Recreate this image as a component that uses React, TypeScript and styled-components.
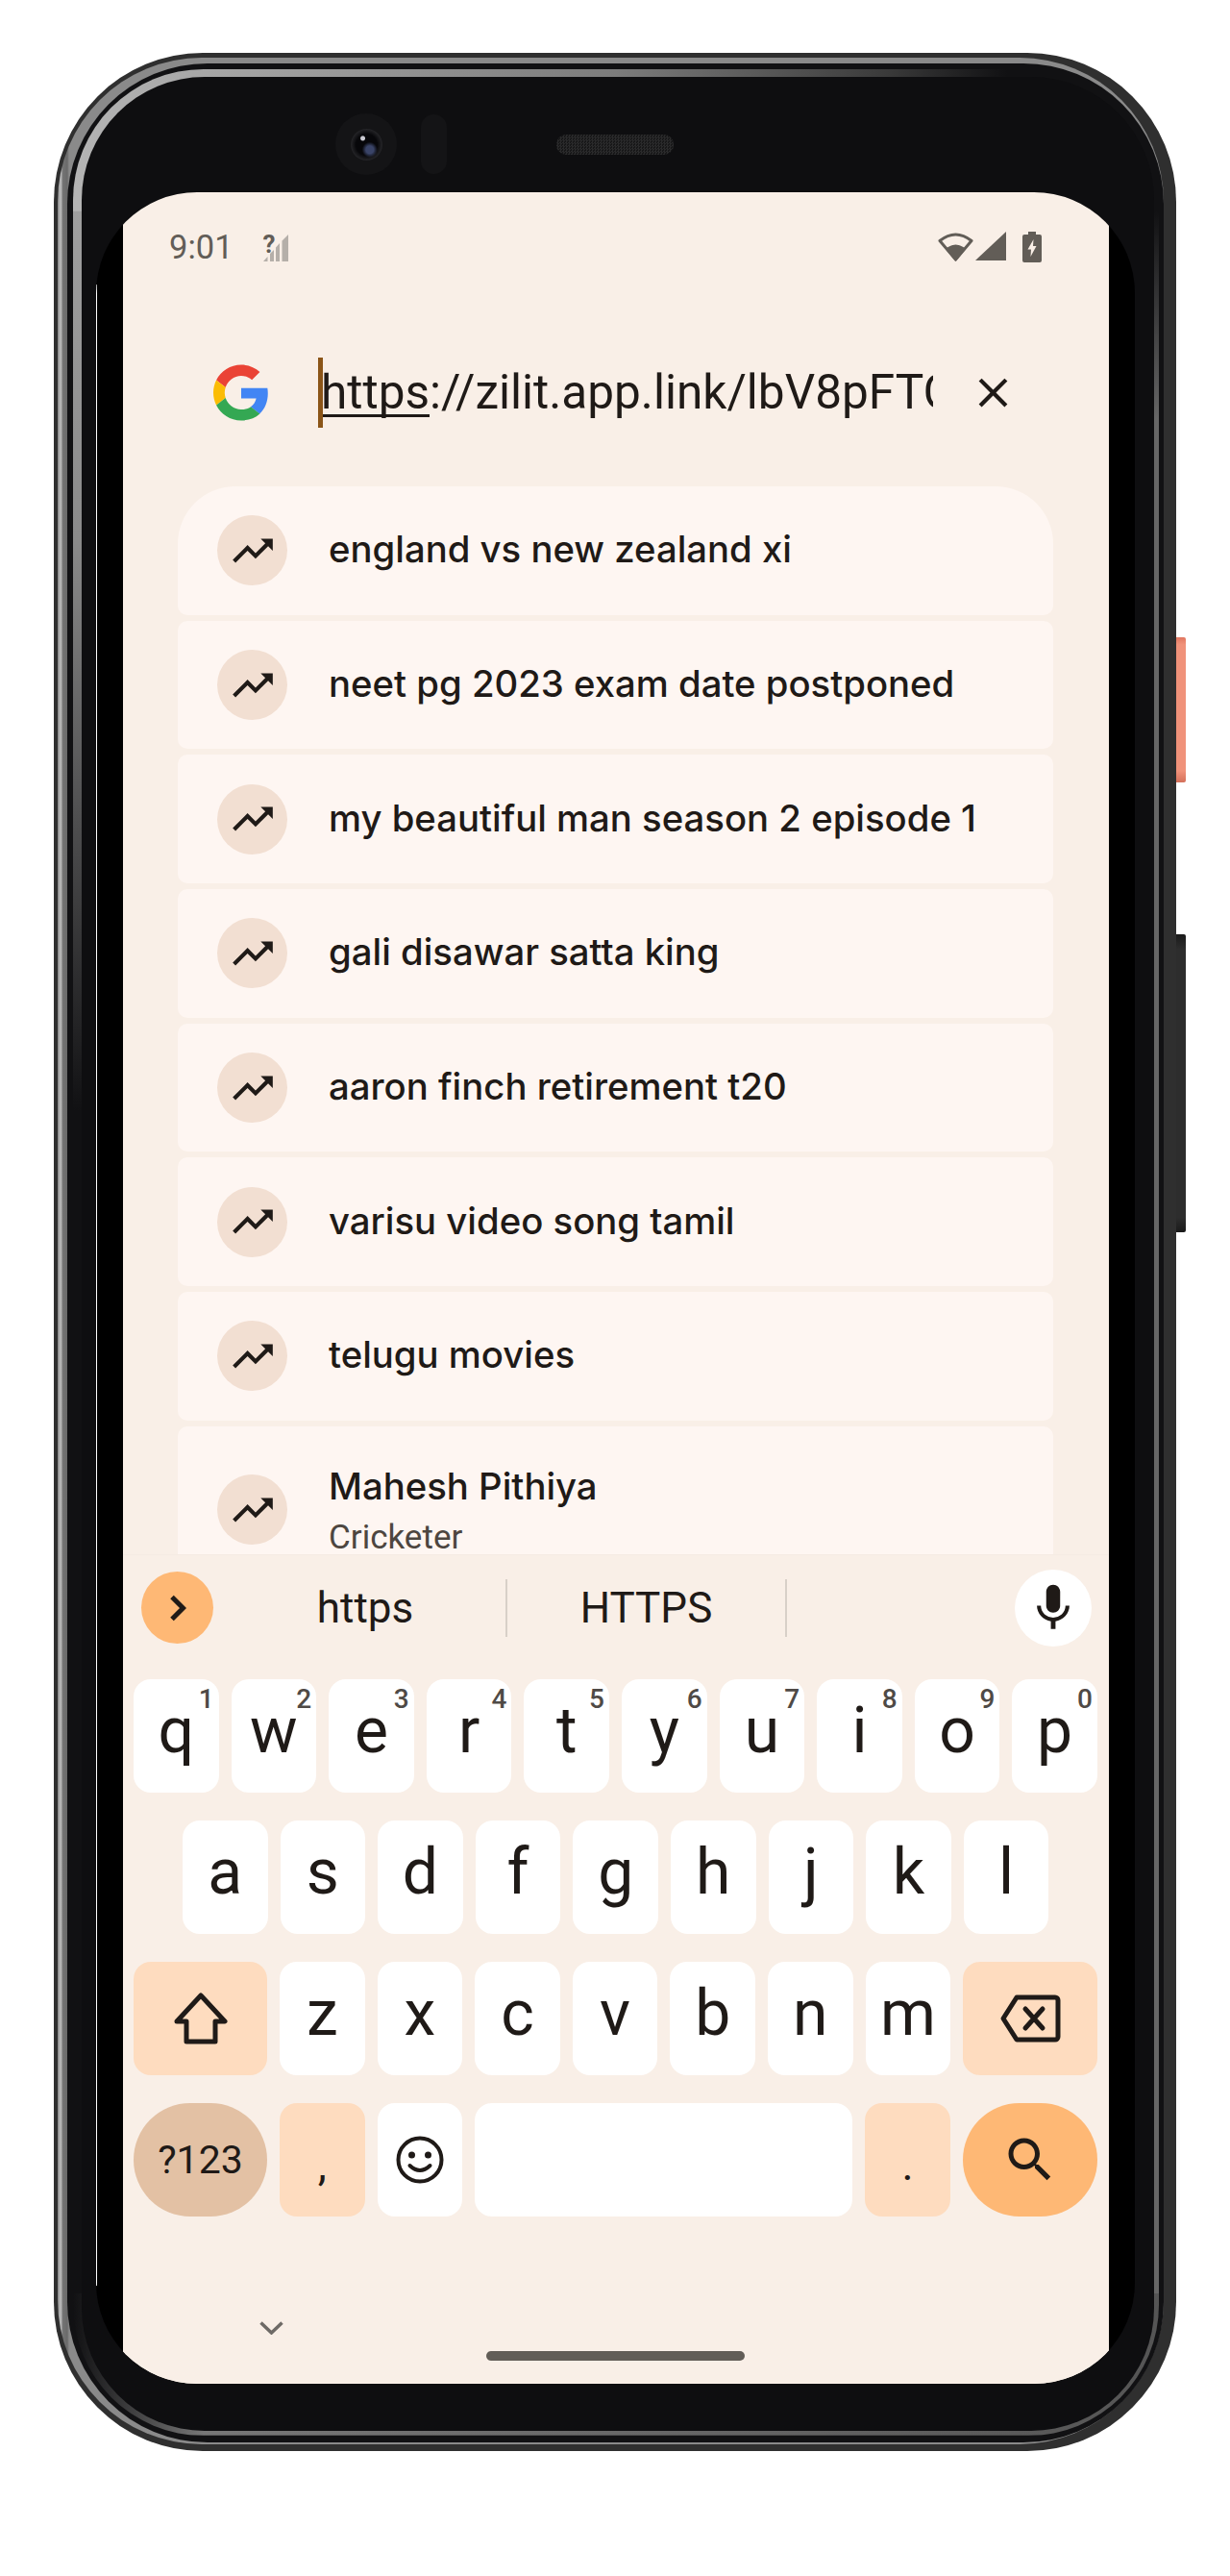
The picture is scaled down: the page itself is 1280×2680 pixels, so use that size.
import React from "react";
import styled, { createGlobalStyle } from "styled-components";

const INK = "#1f1a17";
const SANS = `Roboto, "Liberation Sans", sans-serif`;
const TITLE = `Inter, Roboto, sans-serif`;

const GlobalStyle = createGlobalStyle`
  html, body {
    margin: 0;
    background: #fff;
  }
  * {
    box-sizing: border-box;
  }
`;

const Page = styled.div`
  width: 1280px;
  height: 2680px;
  padding: 55px 56px 0;
  background: #fff;
  overflow: hidden;
`;

//--------- Phone body -----------//

const Shell = styled.div`
  position: relative;
  width: 1168px;
  height: 2495px;
  display: flex;
  padding: 5px 13px 7px 4px;
  border-radius: 155px;
  background: #2f2f2f;
`;

const SideButton = styled.div<{ $top: number; $height: number; $orange?: boolean }>`
  position: absolute;
  right: -10px;
  top: ${({ $top }) => $top}px;
  width: 10px;
  height: ${({ $height }) => $height}px;
  border-radius: 0 2px 2px 0;
  background: ${({ $orange }) =>
    $orange
      ? "linear-gradient(#e0765f, #f0927a 5%, #f0927a 92%, #d4705a)"
      : "linear-gradient(#1a1a1a, #2d2d2d 5%, #2d2d2d 95%, #1a1a1a)"};
`;

const OuterRim = styled.div`
  flex: 1;
  display: flex;
  padding: 6px 0 2px 10px;
  border-radius: 150px;
  background: linear-gradient(to right, #7d7d7d 0, #b4b4b4 2px, #b4b4b4 4px, #757575 5px, #6a6a6a 10px, #8a8a8a 12px);
`;

const DarkRim = styled.div`
  flex: 1;
  display: flex;
  padding: 6px 5px 7px 6px;
  border-radius: 146px;
  background: #111113;
`;

const InnerRim = styled.div`
  flex: 1;
  display: flex;
  padding: 8px 5px 5px 9px;
  border-radius: 136px;
  background-color: #111113;
  background-repeat: no-repeat;
  background-image: linear-gradient(to right, #111113 0, #777 12%, #555 100%),
    linear-gradient(#111113 0, #666 10%),
    linear-gradient(to right, #7c7c7c, #3a3a3a 50%, #111113 72%),
    linear-gradient(to right, #b4b4b4, #7c7c7c),
    linear-gradient(#a8a8a8 0, #8a8a8a 20%, #111113 44%);
  background-size: 100% 6%, 50% 88%, 50% 6%, 50% 6%, 50% 100%;
  background-position: left bottom, right center, right top, left top, left top;
`;

const Bezel = styled.div`
  flex: 1;
  display: flex;
  flex-direction: column;
  padding: 0 20px 49px 15px;
  border-radius: 128px;
  background: #0e0e10;
`;

const SensorRow = styled.div`
  height: 120px;
  flex: none;
  display: flex;
  align-items: center;
  padding: 20px 0 0 249px;
`;

const Camera = styled.div`
  width: 64px;
  height: 64px;
  display: flex;
  align-items: center;
  justify-content: center;
  border-radius: 50%;
  background: #141416;
`;

const CameraLens = styled.div`
  width: 33px;
  height: 33px;
  border-radius: 50%;
  background: radial-gradient(circle at 38% 30%, #c9c9d2 0 2px, transparent 3px),
    radial-gradient(circle at 60% 66%, #3a4468 0 4px, transparent 8px),
    radial-gradient(circle, #07070a 0 11px, #232326 16px);
`;

const SensorPill = styled.div`
  width: 27px;
  height: 62px;
  margin-left: 25px;
  border-radius: 14px;
  background: #141416;
`;

const Speaker = styled.div`
  width: 122px;
  height: 21px;
  margin-left: 114px;
  border-radius: 10px;
  background: repeating-conic-gradient(#2a2a2b 0 25%, #171718 0 50%) 0 0 / 3px 3px;
`;

const ScreenMask = styled.div`
  position: relative;
  flex: 1;
  display: flex;
  padding: 0 27px 0 28px;
  border-radius: 105px;
  background: #000;
  overflow: hidden;
`;

const EdgeLine = styled.div`
  position: absolute;
  left: 0;
  top: 96px;
  bottom: 102px;
  width: 1px;
  background: #fff;
`;

const Screen = styled.div`
  flex: 1;
  display: flex;
  flex-direction: column;
  min-width: 0;
  background: #f9efe7;
`;

//--------- Status bar -----------//

const StatusBar = styled.div`
  height: 112px;
  flex: none;
  display: flex;
  align-items: flex-start;
  padding: 39px 0 0 48px;
`;

const Clock = styled.span`
  font: 400 34.5px/36px ${SANS};
  color: #625d57;
`;

const NoSimBadge = styled.div`
  position: relative;
  width: 27px;
  height: 31px;
  margin: 3px 0 0 31px;
`;

const NoSimMark = styled.span`
  position: absolute;
  left: 0;
  top: -1px;
  font: 700 26px/26px ${SANS};
  color: #625d57;
`;

const StatusIcons = styled.div`
  display: flex;
  align-items: flex-start;
  margin-left: auto;
  padding: 2px 70px 0 0;
`;

const StatusIcon = styled.svg<{ $gap: number }>`
  margin-left: ${({ $gap }) => $gap}px;
`;

//--------- Search row -----------//

const SearchRow = styled.div`
  height: 194px;
  flex: none;
  display: flex;
  align-items: center;
  padding: 0 0 2px 94px;
`;

const UrlBox = styled.div`
  position: relative;
  width: 640px;
  height: 73px;
  margin-left: 51px;
  padding-left: 3px;
  font: 400 49.5px/73px ${SANS};
  color: ${INK};
  white-space: nowrap;
  overflow: hidden;

  &::before {
    content: "";
    position: absolute;
    left: 0;
    top: 0;
    width: 5px;
    height: 73px;
    background: #8b5518;
  }
`;

const Composing = styled.span`
  text-decoration: underline;
  text-decoration-thickness: 3px;
  text-underline-offset: 6px;
  text-decoration-skip-ink: none;
`;

const ClearIcon = styled.svg`
  margin-left: 37px;
`;

//--------- Suggestions -----------//

const SuggestionList = styled.div`
  flex: 1;
  min-height: 0;
  display: flex;
  flex-direction: column;
  gap: 6px;
  margin: 0 58px 0 57px;
  overflow: hidden;
`;

const SuggestionCard = styled.div<{ $first?: boolean; $tall?: boolean }>`
  height: ${({ $tall }) => ($tall ? 174 : 133.7)}px;
  flex: none;
  display: flex;
  align-items: center;
  padding-left: 41px;
  border-radius: ${({ $first }) => ($first ? "60px 60px 10px 10px" : "10px")};
  background: #fef6f2;
`;

const TrendBadge = styled.div`
  width: 73px;
  height: 73px;
  flex: none;
  display: flex;
  align-items: center;
  justify-content: center;
  border-radius: 50%;
  background: #f2dfd2;
`;

const SuggestionText = styled.div<{ $tall?: boolean }>`
  margin: ${({ $tall }) => ($tall ? 3 : -3)}px 0 0 43px;
`;

const SuggestionTitle = styled.div`
  font: 500 38.3px/44px ${TITLE};
  color: ${INK};
  white-space: nowrap;
`;

const SuggestionSub = styled.div`
  margin-top: 12px;
  font: 400 35px/40px ${SANS};
  color: #4d4640;
`;

//--------- Keyboard -----------//

const Keyboard = styled.div`
  height: 863px;
  flex: none;
  display: flex;
  flex-direction: column;
  border-top: 1px solid #f5ebe3;
  background: #f9efe7;
`;

const CandidateBar = styled.div`
  height: 129px;
  flex: none;
  display: flex;
  align-items: center;
  padding: 0 18px 20px 19px;
`;

const ExpandButton = styled.div`
  width: 75px;
  height: 75px;
  flex: none;
  display: flex;
  align-items: center;
  justify-content: center;
  border-radius: 50%;
  background: #feb875;
`;

const Candidate = styled.div<{ $width: number; $inset?: number }>`
  width: ${({ $width }) => $width}px;
  padding-left: ${({ $inset }) => $inset ?? 0}px;
  text-align: center;
  font: 400 44px/60px ${SANS};
  color: ${INK};
`;

const CandidateDivider = styled.div`
  width: 2px;
  height: 60px;
  flex: none;
  background: #d8d0c8;
`;

const MicButton = styled.div`
  width: 80px;
  height: 80px;
  flex: none;
  display: flex;
  align-items: center;
  justify-content: center;
  margin-left: auto;
  border-radius: 50%;
  background: #fff;
`;

const KeyRows = styled.div`
  display: flex;
  flex-direction: column;
  gap: 29px;
  padding: 0 11px;
`;

const KeyRow = styled.div<{ $inset?: number }>`
  display: flex;
  gap: 13px;
  padding-left: ${({ $inset }) => $inset ?? 0}px;
`;

const TONES = {
  plain: "#ffffff",
  soft: "#fedcbf",
  mode: "#e3c1a4",
  action: "#feb875",
};

const Key = styled.div<{ $width?: number; $tone?: keyof typeof TONES; $round?: boolean }>`
  position: relative;
  width: ${({ $width }) => $width ?? 88.6}px;
  height: 118px;
  flex: none;
  display: flex;
  align-items: center;
  justify-content: center;
  border-radius: ${({ $round }) => ($round ? "59px" : "18px")};
  background: ${({ $tone }) => TONES[$tone ?? "plain"]};
  color: ${INK};
`;

const Letter = styled.span`
  margin-top: -10px;
  font: 400 66px/1 ${SANS};
`;

const KeyHint = styled.span`
  position: absolute;
  top: 7px;
  right: 5px;
  font: 500 28px/28px ${SANS};
  color: #4f4a46;
`;

const ModeLabel = styled.span`
  font: 400 41px/1 ${SANS};
`;

const Punctuation = styled.span`
  padding-top: 10px;
  font: 400 46px/1 ${SANS};
`;

const NavBar = styled.div`
  flex: 1;
  display: flex;
  align-items: flex-end;
  padding: 0 0 24px 142px;
`;

const HideIcon = styled.svg`
  margin-bottom: 27px;
`;

const HomePill = styled.div`
  width: 269px;
  height: 10px;
  margin-left: 211px;
  border-radius: 5px;
  background: #625d57;
`;

//--------- Icons -----------//

const GoogleLogo = () => (
  <svg width="58" height="59" viewBox="0 0 48 48">
    <path fill="#EA4335" d="M24 9.5c3.54 0 6.71 1.22 9.21 3.6l6.85-6.85C35.9 2.38 30.47 0 24 0 14.62 0 6.51 5.38 2.56 13.22l7.98 6.19C12.43 13.72 17.74 9.5 24 9.5z" />
    <path fill="#4285F4" d="M46.98 24.55c0-1.57-.15-3.09-.38-4.55H24v9.02h12.94c-.58 2.96-2.26 5.48-4.78 7.18l7.73 6c4.51-4.18 7.09-10.36 7.09-17.65z" />
    <path fill="#FBBC05" d="M10.53 28.59c-.48-1.45-.76-2.99-.76-4.59s.27-3.14.76-4.59l-7.98-6.19C.92 16.46 0 20.12 0 24c0 3.88.92 7.54 2.56 10.78l7.97-6.19z" />
    <path fill="#34A853" d="M24 48c6.48 0 11.93-2.13 16.03-5.81l-7.73-6c-2.15 1.45-4.92 2.3-8.3 2.3-6.26 0-11.57-4.22-13.47-9.91l-7.98 6.19C6.51 42.62 14.62 48 24 48z" />
  </svg>
);

const TrendIcon = () => (
  <svg width="50" height="50" viewBox="0 0 24 24" fill={INK}>
    <path d="M16 6l2.29 2.29-4.88 4.88-4-4L2 16.59 3.41 18l6-6 4 4 6.3-6.29L22 12V6z" />
  </svg>
);

const NoSim = () => (
  <NoSimBadge>
    <svg width="27" height="31" viewBox="0 0 27 31">
      <path d="M0 30 L4.5 25 V30Z M7 30 V22 L11 18 V30Z M13 30 V15.5 L17 11 V30Z M19.5 30 V8.5 L26 2 V30Z" fill="#b5afa9" />
    </svg>
    <NoSimMark>?</NoSimMark>
  </NoSimBadge>
);

const Wifi = () => (
  <StatusIcon $gap={0} width="37" height="32" viewBox="0 0 37 32">
    <path d="M18.5 29 L2 9.5 Q18.5 -3.5 35 9.5 Z" fill="none" stroke="#625d57" strokeWidth="3" strokeLinejoin="round" />
    <path d="M18.5 31 L8 18 Q18.5 9 29 18 Z" fill="#625d57" />
  </StatusIcon>
);

const Signal = () => (
  <StatusIcon $gap={2} width="32" height="31" viewBox="0 0 32 31">
    <path d="M32 0 V30 H0 Z" fill="#625d57" />
  </StatusIcon>
);

const Battery = () => (
  <StatusIcon $gap={17} width="20" height="32" viewBox="0 0 20 32">
    <path d="M6 0 H14 V3 H18 a2 2 0 0 1 2 2 V30 a2 2 0 0 1-2 2 H2 a2 2 0 0 1-2-2 V5 a2 2 0 0 1 2-2 H6 Z" fill="#625d57" />
    <path d="M11.5 8 L5.5 18.5 H9 L8.5 26 L14.5 15 H11 Z" fill="#f9efe7" />
  </StatusIcon>
);

const ShiftIcon = () => (
  <svg width="56" height="54" viewBox="0 0 56 54" fill="none" stroke={INK} strokeWidth="5" strokeLinejoin="round">
    <path d="M28 3 L53 30 H43 V51 H13 V30 H3 Z" />
  </svg>
);

const BackspaceIcon = () => (
  <svg width="63" height="50" viewBox="0 0 63 50" fill="none" stroke={INK} strokeWidth="5" strokeLinejoin="round" strokeLinecap="round">
    <path d="M3 25 L17 3 H57 a3 3 0 0 1 3 3 V44 a3 3 0 0 1-3 3 H17 Z" />
    <path d="M26 15 L44 35 M44 15 L26 35" />
  </svg>
);

const EmojiIcon = () => (
  <svg width="50" height="50" viewBox="0 0 50 50">
    <circle cx="25" cy="25" r="22.5" fill="none" stroke={INK} strokeWidth="4" />
    <circle cx="16.5" cy="20" r="3.5" fill={INK} />
    <circle cx="33.5" cy="20" r="3.5" fill={INK} />
    <path d="M14.5 31 Q25 41 35.5 31" fill="none" stroke={INK} strokeWidth="4" strokeLinecap="round" />
  </svg>
);

const SearchIcon = () => (
  <svg width="60" height="60" viewBox="0 0 24 24" fill={INK}>
    <path d="M15.5 14h-.79l-.28-.27C15.41 12.59 16 11.11 16 9.5 16 5.91 13.09 3 9.5 3S3 5.91 3 9.5 5.91 16 9.5 16c1.61 0 3.09-.59 4.23-1.57l.27.28v.79l5 4.99L20.49 19l-4.99-5zm-6 0C7.01 14 5 11.99 5 9.5S7.01 5 9.5 5 14 7.01 14 9.5 11.99 14 9.5 14z" />
  </svg>
);

const MicIcon = () => (
  <svg width="58" height="58" viewBox="0 0 24 24" fill={INK}>
    <path d="M12 14c1.66 0 2.99-1.34 2.99-3L15 5c0-1.66-1.34-3-3-3S9 3.34 9 5v6c0 1.66 1.34 3 3 3zm5.3-3c0 3-2.54 5.1-5.3 5.1S6.7 14 6.7 11H5c0 3.41 2.72 6.23 6 6.72V21h2v-3.28c3.28-.48 6-3.3 6-6.72h-1.7z" />
  </svg>
);

//--------- Data -----------//

const SUGGESTIONS = [
  "england vs new zealand xi",
  "neet pg 2023 exam date postponed",
  "my beautiful man season 2 episode 1",
  "gali disawar satta king",
  "aaron finch retirement t20",
  "varisu video song tamil",
  "telugu movies",
];

const TOP_ROW = "qwertyuiop".split("");
const TOP_HINTS = "1234567890".split("");

export default function App() {
  return (
    <Page>
      <GlobalStyle />
      <Shell>
        <SideButton $orange $top={608} $height={151} />
        <SideButton $top={917} $height={310} />
        <OuterRim>
          <DarkRim>
            <InnerRim>
              <Bezel>
                <SensorRow>
                  <Camera>
                    <CameraLens />
                  </Camera>
                  <SensorPill />
                  <Speaker />
                </SensorRow>
                <ScreenMask>
                  <EdgeLine />
                  <Screen>
                    <StatusBar>
                      <Clock>9:01</Clock>
                      <NoSim />
                      <StatusIcons>
                        <Wifi />
                        <Signal />
                        <Battery />
                      </StatusIcons>
                    </StatusBar>

                    <SearchRow>
                      <GoogleLogo />
                      <UrlBox>
                        <Composing>https</Composing>://zilit.app.link/lbV8pFTG
                      </UrlBox>
                      <ClearIcon width="51" height="51" viewBox="0 0 24 24" fill={INK}>
                        <path d="M19 6.41L17.59 5 12 10.59 6.41 5 5 6.41 10.59 12 5 17.59 6.41 19 12 13.41 17.59 19 19 17.59 13.41 12z" />
                      </ClearIcon>
                    </SearchRow>

                    <SuggestionList>
                      {SUGGESTIONS.map((text, i) => (
                        <SuggestionCard key={text} $first={i === 0}>
                          <TrendBadge>
                            <TrendIcon />
                          </TrendBadge>
                          <SuggestionText>
                            <SuggestionTitle>{text}</SuggestionTitle>
                          </SuggestionText>
                        </SuggestionCard>
                      ))}
                      <SuggestionCard $tall>
                        <TrendBadge>
                          <TrendIcon />
                        </TrendBadge>
                        <SuggestionText $tall>
                          <SuggestionTitle>Mahesh Pithiya</SuggestionTitle>
                          <SuggestionSub>Cricketer</SuggestionSub>
                        </SuggestionText>
                      </SuggestionCard>
                    </SuggestionList>

                    <Keyboard>
                      <CandidateBar>
                        <ExpandButton>
                          <svg width="18" height="28" viewBox="0 0 18 28" fill="none" stroke={INK} strokeWidth="5">
                            <path d="M3 2.5 L14.5 14 L3 25.5" />
                          </svg>
                        </ExpandButton>
                        <Candidate $width={304} $inset={12}>https</Candidate>
                        <CandidateDivider />
                        <Candidate $width={289}>HTTPS</Candidate>
                        <CandidateDivider />
                        <MicButton>
                          <MicIcon />
                        </MicButton>
                      </CandidateBar>

                      <KeyRows>
                        <KeyRow>
                          {TOP_ROW.map((letter, i) => (
                            <Key key={letter}>
                              <Letter>{letter}</Letter>
                              <KeyHint>{TOP_HINTS[i]}</KeyHint>
                            </Key>
                          ))}
                        </KeyRow>
                        <KeyRow $inset={51}>
                          {"asdfghjkl".split("").map((letter) => (
                            <Key key={letter}>
                              <Letter>{letter}</Letter>
                            </Key>
                          ))}
                        </KeyRow>
                        <KeyRow>
                          <Key $width={139} $tone="soft">
                            <ShiftIcon />
                          </Key>
                          {"zxcvbnm".split("").map((letter) => (
                            <Key key={letter}>
                              <Letter>{letter}</Letter>
                            </Key>
                          ))}
                          <Key $width={140} $tone="soft">
                            <BackspaceIcon />
                          </Key>
                        </KeyRow>
                        <KeyRow>
                          <Key $width={139} $tone="mode" $round>
                            <ModeLabel>?123</ModeLabel>
                          </Key>
                          <Key $tone="soft">
                            <Punctuation>,</Punctuation>
                          </Key>
                          <Key>
                            <EmojiIcon />
                          </Key>
                          <Key $width={393} />
                          <Key $tone="soft">
                            <Punctuation>.</Punctuation>
                          </Key>
                          <Key $width={140} $tone="action" $round>
                            <SearchIcon />
                          </Key>
                        </KeyRow>
                      </KeyRows>

                      <NavBar>
                        <HideIcon width="25" height="14" viewBox="0 0 25 14" fill="none" stroke="#6e6a66" strokeWidth="3.5">
                          <path d="M1.5 1.5 L12.5 12 L23.5 1.5" />
                        </HideIcon>
                        <HomePill />
                      </NavBar>
                    </Keyboard>
                  </Screen>
                </ScreenMask>
              </Bezel>
            </InnerRim>
          </DarkRim>
        </OuterRim>
      </Shell>
    </Page>
  );
}
